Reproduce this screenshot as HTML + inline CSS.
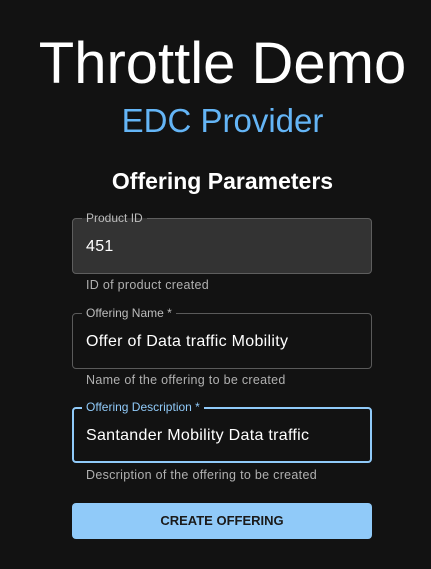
<!DOCTYPE html>
<html><head><style>
body{margin:0;background:#121212;width:431px;height:569px;overflow:hidden;font-family:"Liberation Sans",sans-serif;color:#fff;position:relative}
.a{position:absolute;left:7px;width:431px;text-align:center;white-space:nowrap}
.f{position:absolute;left:72px;width:298px;height:54px;border:1px solid #5a5a5a;border-radius:4px}
.f .l{position:absolute;left:9px;top:-8px;background:#121212;padding:0 4px;font-size:12px;color:#bdbdbd;line-height:14px}
.f .v{position:absolute;left:13px;top:19px;font-size:16px;line-height:18px;letter-spacing:0.3px}
.h{position:absolute;left:86px;font-size:12.5px;color:#b0b0b0;letter-spacing:0.3px}
</style></head><body>
<div class="a" style="top:29px;font-size:58px;font-weight:300;line-height:70px">Throttle Demo</div>
<div class="a" style="top:101px;font-size:33px;color:#64b5f6;line-height:40px">EDC Provider</div>
<div class="a" style="top:168px;font-size:23px;font-weight:bold;line-height:26px">Offering Parameters</div>
<div class="f" style="top:218px;background:#333;border-color:#5e5e5e"><span class="l" style="background:linear-gradient(#121212 50%,#333 50%)">Product ID</span><span class="v">451</span></div>
<div class="h" style="top:278px">ID of product created</div>
<div class="f" style="top:313px"><span class="l">Offering Name *</span><span class="v">Offer of Data traffic Mobility</span></div>
<div class="h" style="top:373px">Name of the offering to be created</div>
<div class="f" style="top:407px;border:2px solid #90caf9;left:72px;width:296px;height:52px"><span class="l" style="color:#90caf9;left:8px;top:-9px">Offering Description *</span><span class="v" style="left:12px;top:18px">Santander Mobility Data traffic</span></div>
<div class="h" style="top:468px">Description of the offering to be created</div>
<div style="position:absolute;left:72px;top:503px;width:300px;height:36px;background:#90caf9;border-radius:4px;color:#1a1a1a;font-size:13px;font-weight:bold;text-align:center;line-height:36px">CREATE OFFERING</div>
</body></html>
